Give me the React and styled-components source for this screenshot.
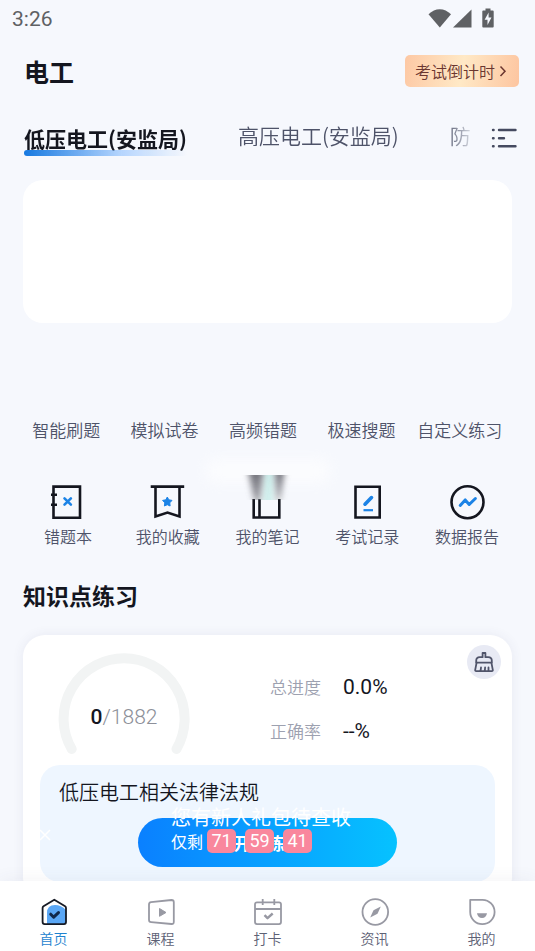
import React from 'react';
import styled, { createGlobalStyle } from 'styled-components';

const quickLinks = ['智能刷题', '模拟试卷', '高频错题', '极速搜题', '自定义练习'];

const App = () => {
    return (
        <Screen>
            <GlobalStyle />
            <Content>
                <StatusBar />
                <Header>
                    <Title>电工</Title>
                    <Countdown type="button">
                        考试倒计时
                        <svg width="8" height="12" viewBox="0 0 8 12" fill="none" stroke="#6b3630" strokeWidth="1.5">
                            <path d="M1.5 1.5 6 6.2 1.5 11" />
                        </svg>
                    </Countdown>
                </Header>
                <TabBar>
                    <Tabs>
                        <Tab type="button" $active>低压电工(安监局)</Tab>
                        <Tab type="button">高压电工(安监局)</Tab>
                        <Tab type="button">防</Tab>
                    </Tabs>
                    <MenuButton type="button" aria-label="全部分类">
                        <svg width="26" height="20" viewBox="0 0 26 20" fill="none" stroke="#454a60" strokeWidth="2.4" strokeLinecap="round">
                            <path d="M2 2h.6M2 10.3h.6M2 18.3h.6M8 2h16.5M8 10.3h5M8 18.3h16.5" />
                        </svg>
                    </MenuButton>
                </TabBar>
                <Banner />
                <QuickRow>
                    {quickLinks.map((name) => (
                        <QuickLink type="button" key={name}>{name}</QuickLink>
                    ))}
                </QuickRow>
                <ToolRow>
                    {tools.map((tool) => (
                        <Tool type="button" key={tool.name}>
                            <ToolIcon>{tool.icon}</ToolIcon>
                            {tool.name}
                        </Tool>
                    ))}
                </ToolRow>
                <Heading>知识点练习</Heading>
                <PracticeCard />
            </Content>
            <Promo />
            <BottomNav>
                {navItems.map((item, index) => (
                    <NavItem href="#" key={item.name} $active={index === 0}>
                        {item.icon}
                        {item.name}
                    </NavItem>
                ))}
            </BottomNav>
        </Screen>
    )
}

export default App;

const StatusBar = () => (
    <Status>
        <span>3:26</span>
        <svg width="68" height="22" viewBox="0 0 68 22" fill="#5f6164">
            <path d="M.5 6.3C7-.6 16.5-.6 23 6.3L11.8 19.5Z" />
            <path d="M43.5 1.5V19.5H25Z" />
            <path d="M57.5.5h5v2h2.3q.9 0 .9.9v15.2q0 .9-.9.9h-9.6q-.9 0-.9-.9V3.4q0-.9.9-.9h2.3z" />
            <path d="m60.6 4.5-4 7.2h2.9v5.2l4-7.4h-2.9z" fill="#f6f8fd" />
        </svg>
    </Status>
)

const PracticeCard = () => (
    <Card>
        <Stats>
            <Gauge>
                <svg width="132" height="104" viewBox="0 0 132 104" fill="none" stroke="#f2f4f4" strokeWidth="10" strokeLinecap="round">
                    <path d="M13.7 97A60.5 60.5 0 1 1 118.5 97" />
                </svg>
                <GaugeText><b>0</b>/1882</GaugeText>
            </Gauge>
            <Metrics>
                <dt>总进度</dt>
                <dd>0.0%</dd>
                <dt>正确率</dt>
                <dd>--%</dd>
            </Metrics>
            <ClearButton type="button" aria-label="清除记录">
                <svg width="20" height="22" viewBox="0 0 20 22" fill="none" stroke="#50546a" strokeWidth="1.8" strokeLinejoin="round" strokeLinecap="round">
                    <path d="M8.6 6.2V2h2.8v4.2h2.8q3.6 0 3.6 3.6v1.8H2.2V9.800q0-3.600 3.600-3.600z" />
                    <path d="M2.6 11.6 1.2 18.800q-.2 1.400 1 1.400h15.600q1.200 0 1-1.400l-1.400-7.200M6.200 20q.8-1.500.8-3.500M10.500 20q.6-1.500.6-3.500M14.500 20v-3.500" />
                </svg>
            </ClearButton>
        </Stats>
        <Chapter>
            <ChapterTitle>低压电工相关法律法规</ChapterTitle>
            <StartButton type="button">开始练习</StartButton>
        </Chapter>
    </Card>
)

const Promo = () => (
    <PromoBar>
        <CloseButton type="button" aria-label="关闭">
            <svg width="12" height="12" viewBox="0 0 12 12" stroke="#fff" strokeWidth="1.5">
                <path d="M1 1l10 10M11 1L1 11" />
            </svg>
        </CloseButton>
        <div>
            <PromoTitle>您有新人礼包待查收</PromoTitle>
            <Timer>
                仅剩
                <TimeBox>71</TimeBox>
                <TimeBox>59</TimeBox>
                <TimeBox>41</TimeBox>
            </Timer>
        </div>
    </PromoBar>
)

const LineIcon = ({ children }) => (
    <svg width="40" height="40" viewBox="0 0 40 40" fill="none" stroke="#14161f" strokeWidth="2.6">
        {children}
    </svg>
)

const NotesIcon = () => (
    <>
        <LineIcon>
            <path d="M6.7 17V35.5H32.3V17M12.5 17V35.5" />
        </LineIcon>
        <Smudge width="150" height="60" viewBox="0 0 150 60">
            <defs>
                <linearGradient id="fade" x2="0" y2="1">
                    <stop offset="0" stopColor="#77777f" />
                    <stop offset=".7" stopColor="#7f7f87" stopOpacity=".85" />
                    <stop offset="1" stopColor="#5b5b63" stopOpacity=".5" />
                </linearGradient>
                <filter id="haze" x="-20%" y="-80%" width="140%" height="260%">
                    <feGaussianBlur stdDeviation="7" />
                </filter>
                <filter id="smear" x="-100%" y="0" width="300%" height="100%">
                    <feGaussianBlur stdDeviation="3 0" />
                </filter>
            </defs>
            <rect x="14" y="10" width="124" height="24" rx="8" fill="#fff" opacity=".6" filter="url(#haze)" />
            <path d="M61 26H91L90 50H60z" fill="#f8fafd" />
            <path d="M71 26H83L81 51H71z" fill="#cdeeeb" filter="url(#smear)" />
            <path d="M57 26H71L68 51H62z" fill="url(#fade)" filter="url(#smear)" />
            <path d="M83 26H92L88 51H85z" fill="url(#fade)" filter="url(#smear)" />
        </Smudge>
    </>
)

const tools = [
    {
        name: '错题本',
        icon: (
            <LineIcon>
                <path d="M5.5 4.6H32V35.7H5.5zM3 12.7h6M3 22.7h6" />
                <path d="m16.5 16.3 6.4 6.4M22.9 16.3l-6.4 6.4" stroke="#1c83e6" strokeLinecap="round" />
            </LineIcon>
        )
    },
    {
        name: '我的收藏',
        icon: (
            <LineIcon>
                <path d="M2.7 4.6H36.2M7.5 4.6V34.5l12-4 12 4V4.6" />
                <path d="m19.3 15 1.5 2.8 3.2.6-2.2 2.4.3 3.2-2.8-1.3-2.9 1.3.4-3.2-2.2-2.4 3.2-.6z" fill="#1c83e6" stroke="#1c83e6" strokeWidth="1" strokeLinejoin="round" />
            </LineIcon>
        )
    },
    {
        name: '我的笔记',
        icon: <NotesIcon />
    },
    {
        name: '考试记录',
        icon: (
            <LineIcon>
                <path d="M8.5 4.8H32.7V35.5H8.5z" />
                <path d="M16.5 28.2H26" stroke="#1c83e6" strokeWidth="2.2" />
                <path d="m18 22.2 6.5-6.6" stroke="#1c83e6" strokeWidth="3.6" strokeLinecap="round" />
            </LineIcon>
        )
    },
    {
        name: '数据报告',
        icon: (
            <LineIcon>
                <circle cx="20.5" cy="20.2" r="16" />
                <path d="m13.2 23.5 5-5.6 4 4.6 6.2-6" stroke="#1c83e6" strokeWidth="3" strokeLinecap="round" strokeLinejoin="round" />
            </LineIcon>
        )
    }
];

const NavIcon = ({ children }) => (
    <svg width="28" height="28" viewBox="0 0 28 28" fill="none" stroke="#9899a3" strokeWidth="1.8" strokeLinejoin="round">
        {children}
    </svg>
)

const navItems = [
    {
        name: '首页',
        icon: (
            <NavIcon>
                <path d="M7 26V15q0-8 8-8 6 0 11 5v14z" fill="#5aa7f5" stroke="none" />
                <path d="M14.3 1.7 3.5 8.3q-.9.6-.9 1.8v14q0 2 2 2h19.4q2 0 2-2v-14q0-1.2-.9-1.8z" stroke="#161a24" />
                <path d="m10.7 16.2 3 3 4.8-4.6" stroke="#10284a" strokeWidth="3" strokeLinecap="round" />
            </NavIcon>
        )
    },
    {
        name: '课程',
        icon: (
            <NavIcon>
                <path d="M4 4.2 24.5 2q2.3 0 2.3 2.3v19.4q0 2.5-2.3 2.3L4.2 24.2Q2 24 2 21.7V6.5Q2 4.4 4 4.2z" />
                <path d="m12.5 10.5 6.5 4-6.5 3.8z" fill="#9899a3" strokeWidth="1" />
            </NavIcon>
        )
    },
    {
        name: '打卡',
        icon: (
            <NavIcon>
                <path d="M3 4.3h22q2 0 2 2v17.8q0 2-2 2H3q-2 0-2-2V6.3q0-2 2-2zM1 11h26M8.7 1v6M20.3 1v6" />
                <path d="m10.5 17.2 3 3 5.2-4.7" strokeWidth="2.4" />
            </NavIcon>
        )
    },
    {
        name: '资讯',
        icon: (
            <NavIcon>
                <circle cx="14.3" cy="14" r="12.8" />
                <path d="m19.8 8.5-3.3 7.3-7.3 3.7 3.3-7.3z" fill="#9899a3" stroke="none" />
            </NavIcon>
        )
    },
    {
        name: '我的',
        icon: (
            <NavIcon>
                <path d="M2.2 1.8H14.5A12.2 12.2 0 1 1 2.2 14z" />
                <path d="M9 15.2h10q-.8 4.8-5 4.8t-5-4.8z" fill="#9899a3" stroke="none" />
            </NavIcon>
        )
    }
];

const GlobalStyle = createGlobalStyle`
    * {
        box-sizing: border-box;
    }

    body {
        margin: 0;
        background: #f6f8fd;
        color: #14161f;
        font-family: "Noto Sans CJK SC", sans-serif;
        font-weight: 350;
    }

    button {
        border: none;
        padding: 0;
        background: none;
        color: inherit;
        font: inherit;
        cursor: pointer;
    }

    svg {
        display: block;
        flex-shrink: 0;
    }
`;

const Screen = styled.div`
    display: flex;
    flex-direction: column;
    height: 100vh;
    position: relative;
    overflow: hidden;
`;

const Content = styled.main`
    flex: 1;
    min-height: 0;
    overflow-y: auto;
    scrollbar-width: none;
`;

const Status = styled.div`
    display: flex;
    justify-content: space-between;
    align-items: center;
    height: 38px;
    padding: 0 39px 0 12px;
    color: #5f6164;
    font-family: Roboto, sans-serif;
    font-size: 21px;
    font-weight: 400;
`;

const Header = styled.header`
    display: flex;
    justify-content: space-between;
    align-items: center;
    padding: 17px 16px 0 24px;
`;

const Title = styled.h1`
    margin: 0;
    font-size: 25px;
    line-height: 32px;
    font-weight: 700;
`;

const Countdown = styled.button`
    display: flex;
    align-items: center;
    gap: 4px;
    height: 32px;
    padding: 0 12px 0 10px;
    border-radius: 5px;
    background: linear-gradient(100deg, #fdc8a4, #ffe9c6 50%, #fdc5a0);
    color: #6b3630;
    font-size: 16px;
`;

const TabBar = styled.div`
    display: flex;
    align-items: center;
    gap: 14px;
    height: 48px;
    margin-top: 25px;
    padding: 0 18px 0 24px;
`;

const Tabs = styled.nav`
    display: flex;
    align-items: flex-start;
    gap: 51px;
    flex: 1;
    min-width: 0;
    height: 48px;
    padding-top: 8px;
    overflow: hidden;
    mask-image: linear-gradient(to left, transparent, #000 32px);
`;

const Tab = styled.button`
    flex-shrink: 0;
    position: relative;
    padding-top: ${({ $active }) => ($active ? '3px' : 0)};
    color: ${({ $active }) => ($active ? '#14161f' : '#4e5369')};
    font-size: 21px;
    line-height: 30px;
    font-weight: ${({ $active }) => ($active ? 700 : 350)};

    &::after {
        content: '';
        display: ${({ $active }) => ($active ? 'block' : 'none')};
        position: absolute;
        left: 0;
        right: 0;
        bottom: -3px;
        height: 6px;
        border-radius: 3px;
        background: linear-gradient(to right, #1779e0, rgba(120, 180, 255, 0.5) 60%, transparent);
    }
`;

const MenuButton = styled.button`
    padding-top: 4px;
`;

const Banner = styled.section`
    min-height: 143px;
    margin: 20px 23px 0;
    border-radius: 20px;
    background: #fff;
`;

const QuickRow = styled.div`
    display: grid;
    grid-template-columns: repeat(5, 1fr);
    padding: 94px 26px 0 17px;
`;

const QuickLink = styled.button`
    color: #4e5369;
    font-size: 17px;
    line-height: 26px;
    white-space: nowrap;
`;

const ToolRow = styled.div`
    display: grid;
    grid-template-columns: repeat(5, 1fr);
    padding: 39px 18px 0;
`;

const Tool = styled.button`
    display: flex;
    flex-direction: column;
    align-items: center;
    gap: 2px;
    color: #4e5369;
    font-size: 16px;
    line-height: 24px;
`;

const ToolIcon = styled.span`
    position: relative;
`;

const Smudge = styled.svg`
    position: absolute;
    left: -55px;
    top: -33px;
    pointer-events: none;
`;

const Heading = styled.h2`
    margin: 31px 23px 24px;
    font-size: 23px;
    line-height: 32px;
    font-weight: 700;
`;

const Card = styled.section`
    margin: 0 23px 24px;
    padding: 17px;
    border-radius: 22px;
    background: #fff;
    box-shadow: 0 0 12px rgba(60, 70, 110, 0.08);
`;

const Stats = styled.div`
    display: flex;
    align-items: flex-start;
    padding-left: 18px;
`;

const Gauge = styled.div`
    display: grid;
    place-items: center;

    > * {
        grid-area: 1 / 1;
    }
`;

const GaugeText = styled.div`
    padding-top: 26px;
    color: #8d9099;
    font-family: Roboto, sans-serif;
    font-size: 21px;
    line-height: 24px;

    b {
        color: #14161f;
        font-weight: 500;
    }
`;

const Metrics = styled.dl`
    display: grid;
    grid-template-columns: 73px auto;
    row-gap: 20px;
    flex: 1;
    margin: 23px 0 0 80px;
    line-height: 24px;

    dt {
        color: #9da1b0;
        font-size: 17px;
    }

    dd {
        margin: 0;
        font-family: Roboto, sans-serif;
        font-size: 21px;
        font-weight: 400;
    }
`;

const ClearButton = styled.button`
    display: grid;
    place-items: center;
    width: 34px;
    height: 34px;
    margin: -7px -6px 0 0;
    border-radius: 50%;
    background: #e8eaf4;
`;

const Chapter = styled.article`
    margin-top: 9px;
    padding: 14px 19px 15px;
    border-radius: 20px;
    background: #eef6ff;
`;

const ChapterTitle = styled.h3`
    margin: 0;
    font-size: 20px;
    line-height: 26px;
    font-weight: 350;
`;

const StartButton = styled.button`
    display: block;
    width: 62%;
    height: 49px;
    margin: 13px auto 0;
    border-radius: 25px;
    background: linear-gradient(to right, #0a80ff, #06c2ff);
    color: #fff;
    font-size: 17px;
    font-weight: 700;
`;

const PromoBar = styled.aside`
    display: flex;
    align-items: center;
    gap: 120px;
    position: absolute;
    left: 39px;
    bottom: 98px;
    color: #fff;
    font-weight: 400;
`;

const CloseButton = styled.button`
    padding-top: 12px;
`;

const PromoTitle = styled.div`
    font-size: 20px;
    line-height: 24px;
`;

const Timer = styled.div`
    display: flex;
    align-items: center;
    gap: 9px;
    font-size: 16px;
    line-height: 24px;
`;

const TimeBox = styled.span`
    width: 29px;
    border-radius: 5px;
    background: #f9879d;
    font-family: Roboto, sans-serif;
    font-size: 18px;
    text-align: center;

    &:first-of-type {
        margin-left: -5px;
    }
`;

const BottomNav = styled.nav`
    display: grid;
    grid-template-columns: repeat(5, 1fr);
    height: 70px;
    padding-top: 17px;
    background: #fff;
    box-shadow: 0 -2px 16px rgba(60, 70, 110, 0.06);
`;

const NavItem = styled.a`
    display: flex;
    flex-direction: column;
    align-items: center;
    gap: 3px;
    color: ${({ $active }) => ($active ? '#1e83cf' : '#5d6175')};
    font-size: 14px;
    line-height: 18px;
    text-decoration: none;
`;
